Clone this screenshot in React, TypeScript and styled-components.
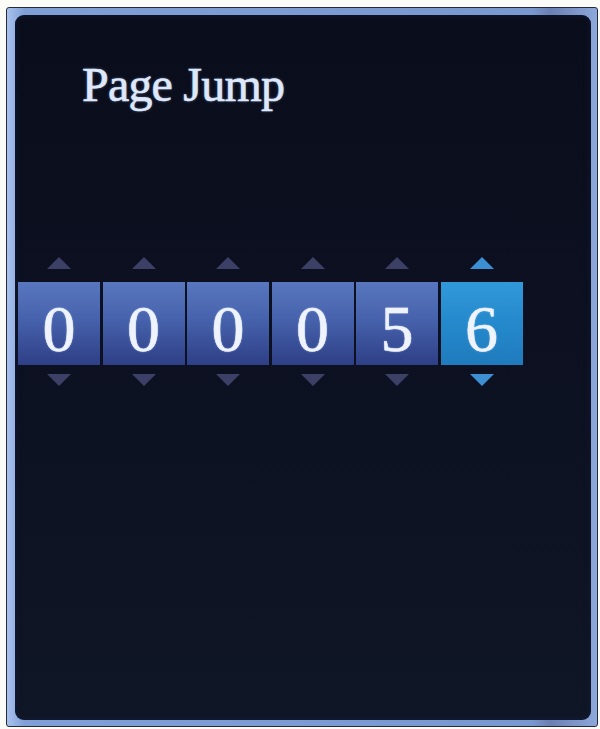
import * as React from 'react';
import styled, { createGlobalStyle } from 'styled-components';

const digits = ['0', '0', '0', '0', '5', '6'];
const selectedIndex = 5;

const GlobalStyle = createGlobalStyle`
	html, body {
		margin: 0;
		padding: 0;
		background: #fbfbf8;
	}
`;

export default function App() {
	return (
		<>
			<GlobalStyle />
			<Bezel>
				<Screen>
					<Title>Page Jump</Title>
					<DigitRow>
						{digits.map((d, i) => (
							<Column key={i}>
								<Arrow up active={i === selectedIndex} />
								<DigitBox active={i === selectedIndex}>{d}</DigitBox>
								<Arrow active={i === selectedIndex} />
							</Column>
						))}
					</DigitRow>
				</Screen>
			</Bezel>
		</>
	);
}

const Bezel = styled.div`
	margin: 7px 2px 0 6px;
	height: 720px;
	box-sizing: border-box;
	border: 1px solid #262b36;
	border-radius: 3px;
	padding: 7px 6px 6px 8px;
	background: linear-gradient(90deg, #a9c2ee 0%, #7f9fd6 3%, #7a98d0 89%, #6a7fb4 92%, #8ea8dc 100%);
	display: flex;
`;

const Screen = styled.div`
	flex: 1;
	border-radius: 9px;
	background: linear-gradient(180deg, #0a0d1b 0%, #0c1020 40%, #0f1626 100%);
	display: flex;
	flex-direction: column;
	box-shadow: inset 0 0 6px rgba(20, 30, 60, 0.8);
`;

const Title = styled.h1`
	margin: 46px 0 0 67px;
	font-family: "Liberation Serif", "Times New Roman", serif;
	font-weight: normal;
	font-size: 48px;
	line-height: 48px;
	letter-spacing: -0.8px;
	color: #dfe8fa;
	-webkit-text-stroke: 0.6px #dfe8fa;
	text-shadow: 0 0 3px rgba(140, 170, 230, 0.6);
`;

const DigitRow = styled.div`
	display: flex;
	gap: 2.5px;
	margin: 148px 0 0 3px;
`;

const Column = styled.div`
	width: 82px;
	display: flex;
	flex-direction: column;
	align-items: center;
`;

const Arrow = styled.div<{ up?: boolean; active?: boolean }>`
	width: 0;
	height: 0;
	border-left: 12px solid transparent;
	border-right: 12px solid transparent;
	${(p) =>
		p.up
			? `border-bottom: 12px solid ${p.active ? '#3b8fd2' : '#3c4066'};`
			: `border-top: 12px solid ${p.active ? '#3b8fd2' : '#3c4066'};`}
	margin: ${(p) => (p.up ? '0 0 13px' : '9px 0 0')};
`;

const DigitBox = styled.div<{ active?: boolean }>`
	width: 100%;
	height: 83px;
	box-sizing: border-box;
	padding-top: 10px;
	line-height: 73px;
	text-align: center;
	font-family: "Liberation Serif", "Times New Roman", serif;
	font-size: 66px;
	color: #eef3fd;
	-webkit-text-stroke: 0.5px #eef3fd;
	text-shadow: 0 0 2px rgba(200, 220, 255, 0.7);
	background: ${(p) =>
		p.active
			? 'linear-gradient(180deg, #3199da 0%, #2489cc 50%, #1f7bbd 100%)'
			: 'linear-gradient(180deg, #5877bf 0%, #4662ac 45%, #2e3f86 100%)'};
`;
